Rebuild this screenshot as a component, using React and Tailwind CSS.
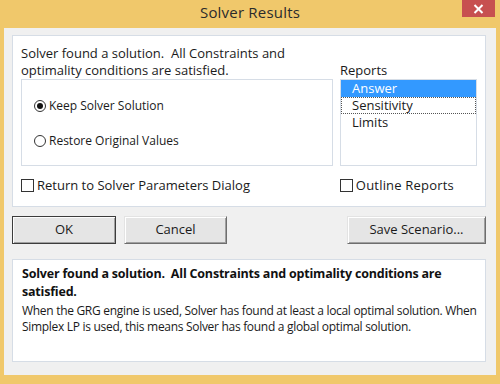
import React from "react";

function Btn({ children, w, def }) {
  return (
    <div
      className={`h-[28px] flex items-center justify-center text-[13px] text-[#1a1a1a] bg-[#e5e5e5] ${w} ${
        def
          ? "border border-[#3c3c3c] shadow-[inset_1px_1px_0_#fdfdfd,inset_-1px_-1px_0_#a0a0a0]"
          : "border border-t-[#e3e3e3] border-l-[#e3e3e3] border-r-[#6e6e6e] border-b-[#6e6e6e] shadow-[inset_1px_1px_0_#ffffff,inset_-1px_-1px_0_#a0a0a0]"
      }`}
    >
      {children}
    </div>
  );
}

export default function App() {
  return (
    <div
      className="w-[500px] h-[384px] bg-[#f0c86b] flex flex-col px-[4px] pb-[9px] overflow-hidden"
      style={{ fontFamily: '"Open Sans", "Noto Sans", sans-serif' }}
    >
      <div className="relative h-[28px] shrink-0 flex items-center justify-center">
        <span className="text-[15px] text-[#2b2b2b] tracking-[0.2px] -mt-[3px]">Solver Results</span>
        <div className="absolute top-0 right-[1px] w-[33px] h-[17px] bg-[#c75050] flex items-center justify-center">
          <svg width="11" height="10" viewBox="0 0 11 10">
            <path d="M1.5 1 L9.5 9 M9.5 1 L1.5 9" stroke="#fff" strokeWidth="2" />
          </svg>
        </div>
      </div>
      <div className="flex-1 bg-[#f0f0f0] pl-[8px] pr-[10px] pt-[7px] flex flex-col">
        {/* top panel */}
        <div className="h-[172px] bg-white border border-[#d6dde6] pl-[8px] pr-[8px] pt-[9px] flex flex-col">
          <div className="text-[13px] leading-[17px] text-[#1a1a1a]">
            Solver found a solution.&nbsp; All Constraints and
            <br />
            optimality conditions are satisfied.
          </div>
          <div className="flex">
            <div className="w-[312px] h-[87px] border border-[#d6dde6] flex flex-col pl-[12px] pt-[17px]">
              <div className="flex items-center gap-[3px] h-[18px] text-[12px] text-[#1a1a1a]">
                <span className="w-[12px] h-[12px] rounded-full border border-[#333] bg-white flex items-center justify-center">
                  <span className="w-[6px] h-[6px] rounded-full bg-[#111]" />
                </span>
                Keep Solver Solution
              </div>
              <div className="flex items-center gap-[3px] h-[18px] mt-[17px] text-[12px] text-[#1a1a1a]">
                <span className="w-[12px] h-[12px] rounded-full border border-[#333] bg-white" />
                Restore Original Values
              </div>
            </div>
            <div className="ml-[7px] flex flex-col">
              <div className="text-[13px] leading-[17px] h-[18px] -mt-[17px] text-[#1a1a1a]">Reports</div>
              <div className="w-[137px] h-[87px] border border-[#d6dde6] mt-[-1px] flex flex-col text-[13px] text-[#1a1a1a]">
                <div className="h-[17px] bg-[#3399ff] text-white pl-[11px] leading-[17px]">Answer</div>
                <div className="h-[17px] border border-dotted border-[#555] pl-[10px] leading-[15px]">Sensitivity</div>
                <div className="h-[17px] pl-[11px] leading-[17px]">Limits</div>
              </div>
            </div>
          </div>
          <div className="flex items-center mt-[11px] h-[17px]">
            <div className="flex items-center gap-[3px] text-[13px] text-[#1a1a1a]">
              <span className="w-[13px] h-[13px] border border-[#333] bg-white" />
              Return to Solver Parameters Dialog
            </div>
            <div className="ml-auto mr-[23px] flex items-center gap-[3px] text-[13px] text-[#1a1a1a] tracking-[0.2px]">
              <span className="w-[13px] h-[13px] border border-[#333] bg-white" />
              Outline Reports
            </div>
          </div>
        </div>
        {/* buttons */}
        <div className="flex mt-[9px] h-[28px]">
          <Btn w="w-[104px]" def>OK</Btn>
          <div className="w-[8px]" />
          <Btn w="w-[103px]">Cancel</Btn>
          <div className="flex-1" />
          <Btn w="w-[139px]">Save Scenario...</Btn>
        </div>
        {/* description */}
        <div className="mt-[15px] h-[103px] bg-white border border-[#d6dde6] pl-[9px] pr-[4px] pt-[5px]">
          <div className="text-[12.5px] leading-[18px] font-bold text-[#111] tracking-[-0.2px] pr-[30px]">
            Solver found a solution.&nbsp; All Constraints and optimality conditions are satisfied.
          </div>
          <div className="text-[12px] leading-[16px] text-[#1a1a1a] mt-[2px] tracking-[-0.3px] whitespace-nowrap">
            When the GRG engine is used, Solver has found at least a local optimal solution. When
            <br />
            Simplex LP is used, this means Solver has found a global optimal solution.
          </div>
        </div>
      </div>
    </div>
  );
}
